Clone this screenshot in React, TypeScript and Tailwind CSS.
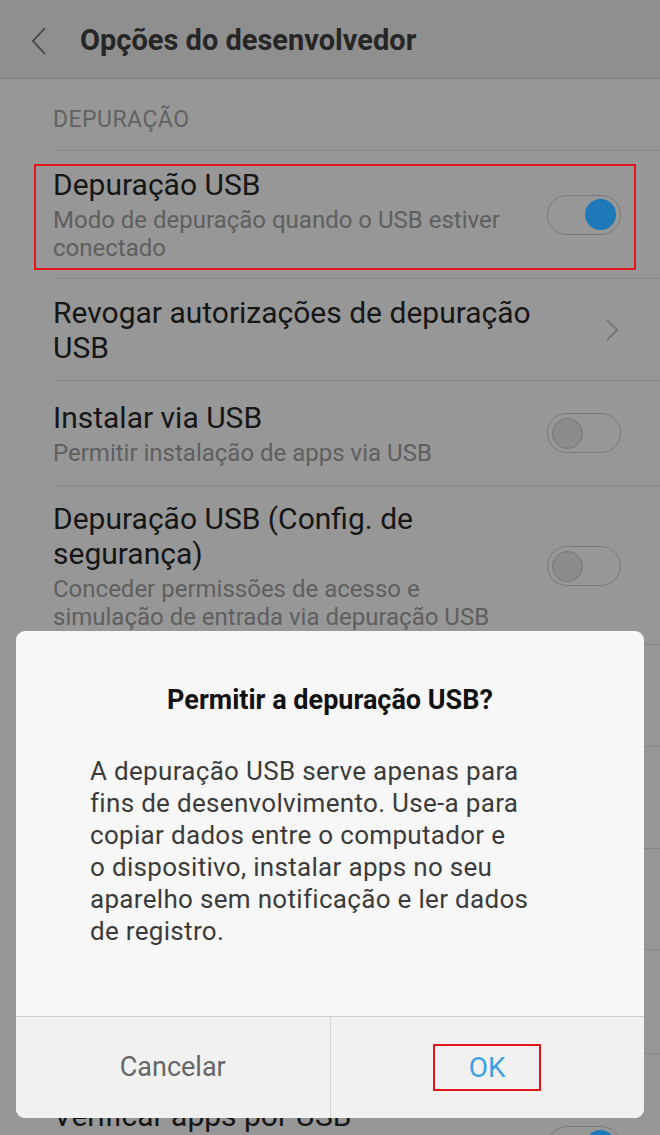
import type { ReactNode } from 'react';

type Control = 'on' | 'off' | 'chevron' | 'none';

type Item = {
  title: string;
  subtitle?: string;
  control: Control;
  minH?: string;
  pad?: string;
  marked?: boolean;
};

const items: Item[] = [
  {
    title: 'Depuração USB',
    subtitle: 'Modo de depuração quando o USB estiver conectado',
    control: 'on',
    minH: 'min-h-[126px]',
    marked: true,
  },
  { title: 'Revogar autorizações de depuração USB', control: 'chevron', pad: 'pt-4 pb-[15px]' },
  {
    title: 'Instalar via USB',
    subtitle: 'Permitir instalação de apps via USB',
    control: 'off',
    minH: 'min-h-[105px]',
  },
  {
    title: 'Depuração USB (Config. de segurança)',
    subtitle: 'Conceder permissões de acesso e simulação de entrada via depuração USB',
    control: 'off',
    pad: 'pt-[15px] pb-[13px]',
  },
  { title: 'Selecionar app de local fictício', subtitle: 'Nenhum app definido', control: 'chevron', minH: 'min-h-[102px]' },
  { title: 'Ativar inspeção de atributo', subtitle: 'Ver atributos', control: 'off', minH: 'min-h-[102px]' },
  { title: 'Selecionar app para depuração', subtitle: 'Nenhum app definido', control: 'chevron', minH: 'min-h-[101px]' },
  { title: 'Aguardar depurador', subtitle: 'App aguarda depurador', control: 'off', minH: 'min-h-[104px]' },
  {
    title: 'Verificar apps por USB',
    subtitle: 'Verificar apps instalados via ADB/ADT para detectar comportamento nocivo',
    control: 'on',
    pad: 'pt-[44px]',
  },
];

function Toggle({ on }: { on: boolean }) {
  return (
    <div
      className={`flex h-[40px] w-[74px] shrink-0 items-center rounded-full border border-[#7a7a7a] px-[4px] ${
        on ? 'justify-end' : 'justify-start'
      }`}
    >
      {on ? (
        <div className="h-[31px] w-[31px] rounded-full bg-[#1f78b8]" />
      ) : (
        <div className="h-[31px] w-[31px] rounded-full border border-[#767676] bg-[#8c8c8c]" />
      )}
    </div>
  );
}

function Chevron() {
  return (
    <svg width="14" height="24" viewBox="0 0 14 24" className="mr-[2px] shrink-0">
      <polyline points="2,2 12,12 2,22" fill="none" stroke="#6f6f6f" strokeWidth="1.6" />
    </svg>
  );
}

function SettingRow({ item }: { item: Item }) {
  let control: ReactNode = null;
  if (item.control === 'on') control = <Toggle on />;
  if (item.control === 'off') control = <Toggle on={false} />;
  if (item.control === 'chevron') control = <Chevron />;

  return (
    <div className="relative pl-[53px]">
      {item.marked && (
        <div className="pointer-events-none absolute top-[13px] bottom-[9px] left-[34px] right-[24px] border-2 border-[#e5141b]" />
      )}
      <div
        className={`flex items-center justify-between gap-4 border-b border-[#878787] pr-[39px] ${item.minH ?? ''} ${
          item.pad ?? 'py-4'
        }`}
      >
        <div className="max-w-[485px] min-w-0 flex-1">
          <div className="text-[30px] leading-[35px] text-[#161616]">{item.title}</div>
          {item.subtitle && (
            <div className="mt-[4px] text-[24px] leading-[28px] text-[#5f5f5f]">{item.subtitle}</div>
          )}
        </div>
        {control}
      </div>
    </div>
  );
}

const bodyLines = [
  'A depuração USB serve apenas para',
  'fins de desenvolvimento. Use-a para',
  'copiar dados entre o computador e',
  'o dispositivo, instalar apps no seu',
  'aparelho sem notificação e ler dados',
  'de registro.',
];

function Dialog() {
  return (
    <div className="absolute top-[631px] left-[16px] flex h-[487px] w-[628px] flex-col overflow-hidden rounded-[9px] bg-[#f7f7f7]">
      <h2 className="pt-[53px] text-center text-[27px] leading-[32px] font-bold text-[#111]">
        Permitir a depuração USB?
      </h2>
      <p className="mt-[39px] pl-[74px] text-[26px] leading-[32px] tracking-[0.012em] whitespace-nowrap text-[#3b3b3b]">
        {bodyLines.map((line, i) => (
          <span key={i} className="block">
            {line}
          </span>
        ))}
      </p>
      <div className="mt-auto flex h-[102px] border-t border-[#cfcfcf] bg-[#f1f1f1]">
        <button className="flex flex-1 items-center justify-center text-[27px] text-[#666]">Cancelar</button>
        <div className="w-px bg-[#d3d3d3]" />
        <button className="flex flex-1 items-center justify-center">
          <span className="flex h-[47px] w-[108px] items-center justify-center border-2 border-[#e5141b] text-[28px] text-[#3f9fe0]">
            OK
          </span>
        </button>
      </div>
    </div>
  );
}

export default function App() {
  return (
    <div
      className="relative h-[1135px] w-[660px] overflow-hidden bg-[#979797]"
      style={{ fontFamily: 'Roboto, "Noto Sans", sans-serif' }}
    >
      <header className="flex h-[79px] items-center border-b border-[#7c7c7c] bg-[#8f8f8f] pt-[4px]">
        <svg width="16" height="28" viewBox="0 0 16 28" className="ml-[31px]">
          <polyline points="14,1 2,14 14,27" fill="none" stroke="#454545" strokeWidth="1.8" />
        </svg>
        <h1 className="ml-[33px] text-[29px] font-bold text-[#262626]">Opções do desenvolvedor</h1>
      </header>

      <div className="ml-[53px] flex h-[72px] items-end border-b border-[#878787] pb-[16px] text-[23px] leading-[28px] tracking-[0.02em] text-[#626262]">
        DEPURAÇÃO
      </div>

      {items.map((item) => (
        <SettingRow key={item.title} item={item} />
      ))}

      <Dialog />
    </div>
  );
}
